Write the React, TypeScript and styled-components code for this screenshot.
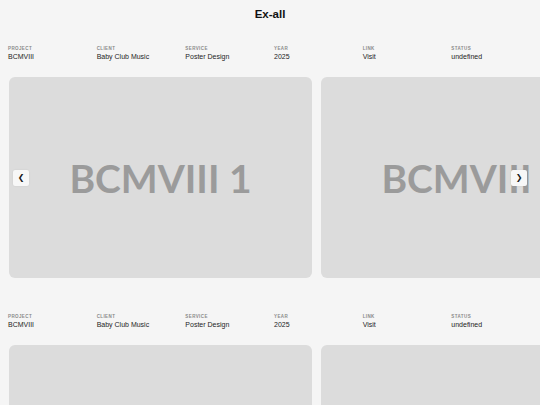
import React from "react";
import styled, { createGlobalStyle } from "styled-components";

const GlobalStyle = createGlobalStyle`
  html, body {
    margin: 0;
    padding: 0;
    background: #f5f5f5;
    font-family: "Liberation Sans", Arial, sans-serif;
    color: #1d1d1d;
    overflow: hidden;
  }
`;

interface Project {
  id: number;
  title: string;
  client: string;
  service: string;
  year: string;
  status?: string;
  slides: number;
}

const projects: Project[] = [
  { id: 1, title: "BCMVIII", client: "Baby Club Music", service: "Poster Design", year: "2025", slides: 2 },
  { id: 2, title: "BCMVIII", client: "Baby Club Music", service: "Poster Design", year: "2025", slides: 2 },
];

const Page = styled.main`
  width: 540px;
  height: 405px;
  overflow: hidden;
`;

const Header = styled.header`
  display: flex;
  justify-content: center;
  padding-top: 7px;
  height: 38px;
  box-sizing: border-box;
`;

const PageTitle = styled.h1`
  margin: 0;
  font-size: 11.5px;
  line-height: 14px;
  font-weight: 700;
  color: #111;
`;

const Section = styled.section`
  margin-bottom: 28px;
`;

const Meta = styled.div`
  display: grid;
  grid-template-columns: repeat(6, 1fr);
  padding: 8px 0 0 8px;
  height: 39px;
  box-sizing: border-box;
`;

const Field = styled.div`
  display: flex;
  flex-direction: column;
`;

const Label = styled.span`
  font-size: 4.5px;
  line-height: 6px;
  font-weight: 700;
  letter-spacing: 0.4px;
  text-transform: uppercase;
  color: #8a8a8a;
`;

const Value = styled.span`
  font-size: 7px;
  line-height: 10px;
  color: #1d1d1d;
`;

const Carousel = styled.div`
  position: relative;
  height: 201px;
  overflow: hidden;
`;

const Track = styled.div`
  display: flex;
  gap: 9px;
  padding-left: 9px;
  height: 100%;
`;

const Slide = styled.div`
  flex: 0 0 303px;
  height: 100%;
  border-radius: 6px;
  background: #dcdcdc;
  display: flex;
  align-items: center;
  justify-content: center;
  font-family: Lato, "Open Sans", sans-serif;
  font-weight: 700;
  font-size: 39px;
  color: #9b9b9b;
  white-space: nowrap;
`;

const Arrow = styled.button<{ $side: "left" | "right" }>`
  position: absolute;
  top: 50%;
  ${(p) => (p.$side === "left" ? "left: 13px;" : "right: 13px;")}
  transform: translateY(-50%);
  width: 16px;
  height: 16px;
  padding: 0;
  border: none;
  border-radius: 2px;
  background: #f7f7f7;
  box-shadow: 0 0 2px rgba(0, 0, 0, 0.08);
  display: flex;
  align-items: center;
  justify-content: center;
  font-family: "DejaVu Sans", sans-serif;
  font-size: 8px;
  color: #1a1a1a;
  cursor: pointer;
`;

const ProjectSection: React.FC<{ project: Project }> = ({ project }) => {
  const fields: [string, string][] = [
    ["Project", project.title],
    ["Client", project.client],
    ["Service", project.service],
    ["Year", project.year],
    ["Link", "Visit"],
    ["Status", String(project.status)],
  ];

  return (
    <Section>
      <Meta>
        {fields.map(([label, value]) => (
          <Field key={label}>
            <Label>{label}</Label>
            <Value>{value}</Value>
          </Field>
        ))}
      </Meta>
      <Carousel>
        <Track>
          {Array.from({ length: project.slides }, (_, i) => (
            <Slide key={i}>
              {project.title} {i + 1}
            </Slide>
          ))}
        </Track>
        <Arrow $side="left">❮</Arrow>
        <Arrow $side="right">❯</Arrow>
      </Carousel>
    </Section>
  );
};

export default function App() {
  return (
    <Page>
      <GlobalStyle />
      <Header>
        <PageTitle>Ex-all</PageTitle>
      </Header>
      {projects.map((p) => (
        <ProjectSection key={p.id} project={p} />
      ))}
    </Page>
  );
}
